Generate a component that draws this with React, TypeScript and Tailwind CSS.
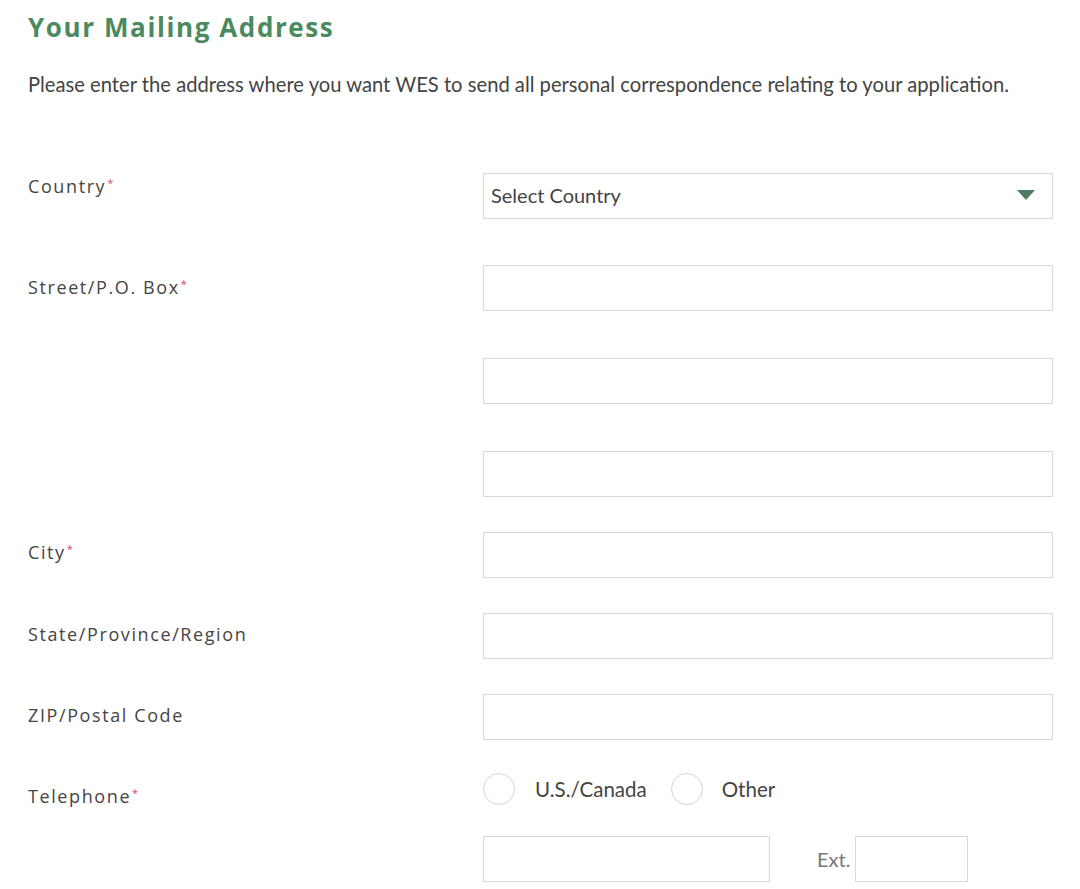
import React from 'react';

const labelFont = { fontFamily: '"Open Sans", "Noto Sans", sans-serif' };

function Label({ text, required, className }: { text: string; required?: boolean; className?: string }) {
  return (
    <div className={`w-[455px] shrink-0 text-[18px] leading-[26px] tracking-[1.6px] text-[#454545] ${className ?? ''}`} style={labelFont}>
      {text}
      {required && <span className="relative -top-[6px] ml-[1px] text-[11px] text-[#d2476a]">*</span>}
    </div>
  );
}

function Field() {
  return <div className="h-[46px] w-[570px] border border-[#d9d9d9] bg-white" />;
}

export default function App() {
  return (
    <div className="min-h-[889px] w-[1080px] bg-white pl-[28px] pt-[11px]" style={{ fontFamily: 'Lato, "Liberation Sans", sans-serif' }}>
      <h1 className="text-[26px] leading-[32px] font-bold tracking-[1.6px] text-[#4b8a5f]" style={{ fontFamily: '"Open Sans", "Noto Sans", sans-serif' }}>
        Your Mailing Address
      </h1>
      <p className="mt-[27px] text-[20.2px] leading-[28px] text-[#444]">
        Please enter the address where you want WES to send all personal correspondence relating to your application.
      </p>

      <div className="mt-[75px] flex">
        <Label text="Country" required className="pt-0" />
        <div className="flex h-[46px] w-[570px] items-center justify-between border border-[#d9d9d9] bg-white pb-[2px] pl-[7px] pr-[17px]">
          <span className="text-[20px] text-[#444]">Select Country</span>
          <svg width="18" height="11" viewBox="0 0 18 11">
            <path d="M0 0 L18 0 L9 10 Z" fill="#4e7c63" />
          </svg>
        </div>
      </div>

      <div className="mt-[46px] flex">
        <Label text="Street/P.O. Box" required className="pt-[9px]" />
        <Field />
      </div>
      <div className="mt-[47px] flex">
        <div className="w-[455px] shrink-0" />
        <Field />
      </div>
      <div className="mt-[47px] flex">
        <div className="w-[455px] shrink-0" />
        <Field />
      </div>

      <div className="mt-[35px] flex">
        <Label text="City" required className="pt-[7px]" />
        <Field />
      </div>
      <div className="mt-[35px] flex">
        <Label text="State/Province/Region" className="pt-[8px]" />
        <Field />
      </div>
      <div className="mt-[35px] flex">
        <Label text="ZIP/Postal Code" className="pt-[8px]" />
        <Field />
      </div>

      <div className="mt-[33px] flex items-start">
        <Label text="Telephone" required className="pt-[10px]" />
        <div className="flex h-[32px] items-center">
          <span className="h-[32px] w-[32px] rounded-full border border-[#d4d4d4]" />
          <span className="ml-[20px] text-[20.5px] text-[#444]">U.S./Canada</span>
          <span className="ml-[24px] h-[32px] w-[32px] rounded-full border border-[#d4d4d4]" />
          <span className="ml-[19px] text-[20.5px] text-[#444]">Other</span>
        </div>
      </div>

      <div className="mt-[24px] flex items-center">
        <div className="w-[455px] shrink-0" />
        <div className="h-[46px] w-[287px] border border-[#d9d9d9]" />
        <span className="ml-[47px] text-[20px] text-[#777]">Ext.</span>
        <div className="ml-[5px] h-[46px] w-[113px] border border-[#d9d9d9]" />
      </div>
    </div>
  );
}
